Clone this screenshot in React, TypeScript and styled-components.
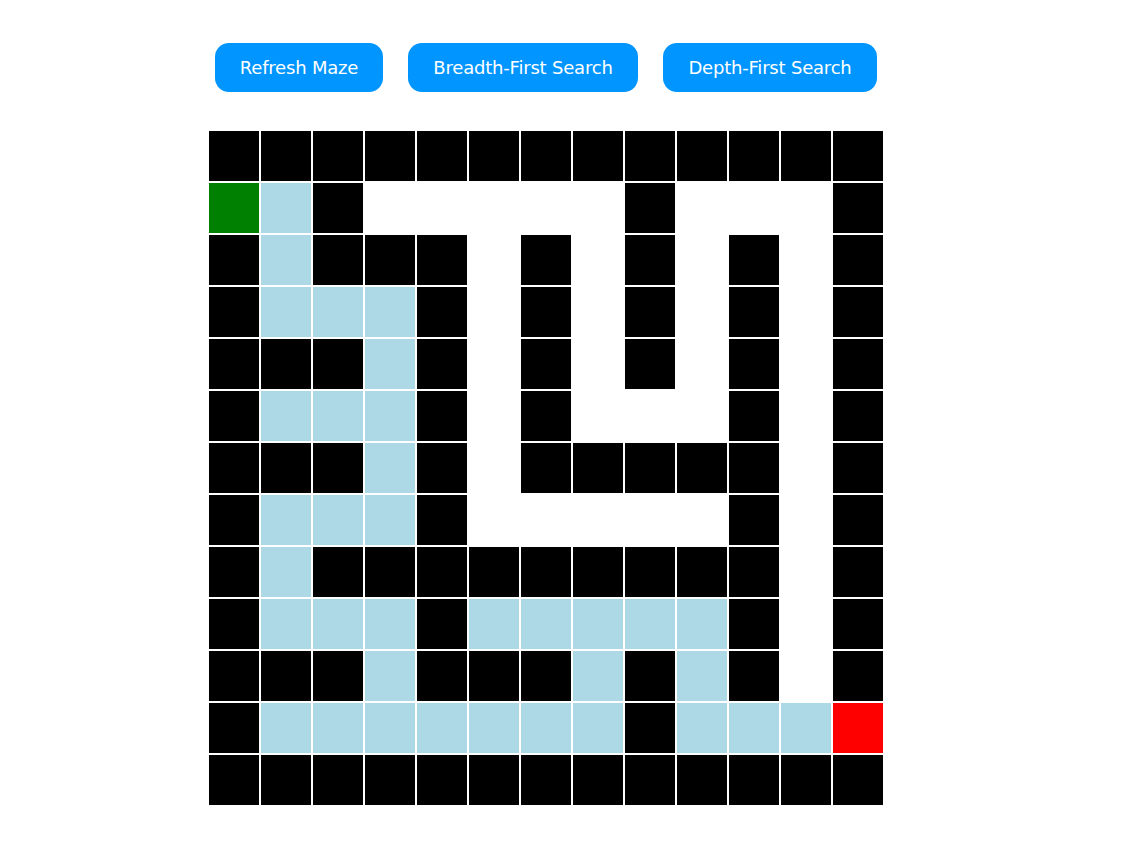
import React from "react";
import styled, { createGlobalStyle } from "styled-components";

const GlobalStyle = createGlobalStyle`
  html, body { margin: 0; padding: 0; background: #ffffff; }
  body { font-family: "DejaVu Sans", Verdana, sans-serif; }
`;

const Page = styled.div`
  width: 674px;
  margin-left: 209px;
  padding-top: 43px;
  display: flex;
  flex-direction: column;
  align-items: center;
`;

const Toolbar = styled.div`
  display: flex;
  gap: 25px;
  margin-bottom: 39px;
`;

const Button = styled.button<{ $w: number }>`
  width: ${(p) => p.$w}px;
  height: 49px;
  border: none;
  border-radius: 14px;
  background: #0095ff;
  color: #ffffff;
  font-family: "DejaVu Sans", Verdana, sans-serif;
  font-size: 18px;
  letter-spacing: -0.2px;
  padding: 0 0 1px;
  cursor: pointer;
`;

const Grid = styled.div`
  display: grid;
  grid-template-columns: repeat(13, 50px);
  grid-auto-rows: 50px;
  gap: 2px;
`;

const colors: Record<string, string> = {
  B: "#000000",
  W: "#ffffff",
  L: "#add8e6",
  G: "#008000",
  R: "#ff0000",
};

const Cell = styled.div<{ $c: string }>`
  background: ${(p) => colors[p.$c]};
`;

const maze = [
  "BBBBBBBBBBBBB",
  "GLBWWWWWBWWWB",
  "BLBBBWBWBWBWB",
  "BLLLBWBWBWBWB",
  "BBBLBWBWBWBWB",
  "BLLLBWBWWWBWB",
  "BBBLBWBBBBBWB",
  "BLLLBWWWWWBWB",
  "BLBBBBBBBBBWB",
  "BLLLBLLLLLBWB",
  "BBBLBBBLBLBWB",
  "BLLLLLLLBLLLR",
  "BBBBBBBBBBBBB",
];

export default function App() {
  return (
    <>
      <GlobalStyle />
      <Page>
        <Toolbar>
          <Button $w={168}>Refresh Maze</Button>
          <Button $w={230}>Breadth-First Search</Button>
          <Button $w={214}>Depth-First Search</Button>
        </Toolbar>
        <Grid>
          {maze.map((row, r) =>
            row.split("").map((c, i) => <Cell key={`${r}-${i}`} $c={c} />)
          )}
        </Grid>
      </Page>
    </>
  );
}
